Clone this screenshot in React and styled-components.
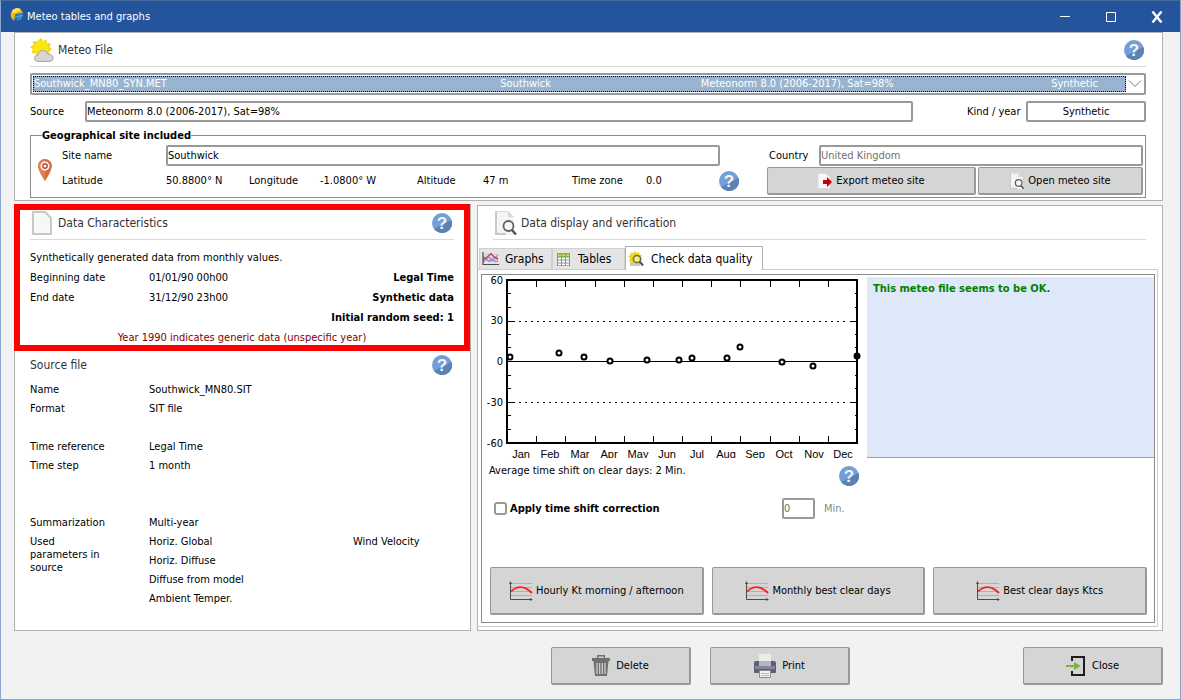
import React from 'react';
import styled, { createGlobalStyle } from 'styled-components';

const months = ['Jan', 'Feb', 'Mar', 'Apr', 'May', 'Jun', 'Jul', 'Aug', 'Sep', 'Oct', 'Nov', 'Dec'];

// x: position inside the year (px on the plot), y: time shift in minutes
const points = [
  [3, 3], [52, 6], [77, 3], [103, 0], [140, 1], [172, 1],
  [185, 2], [220, 2], [233, 10], [275, -1], [306, -4], [350, 4],
];

const HelpIcon = () => (
  <svg width="20" height="20" viewBox="0 0 20 20">
    <circle cx="10" cy="10" r="10" fill="#739fd8" />
    <path d="M19.6 7A10 10 0 0 1 2 16Z" fill="#5b82b3" />
    <text x="10" y="16" textAnchor="middle" fontFamily="Liberation Sans, sans-serif" fontWeight="bold" fontSize="17" fill="#f4f4f4">?</text>
  </svg>
);

const LogoIcon = () => (
  <svg width="14" height="18" viewBox="0 0 14 18">
    <path d="M4 12.500A6.300 6.300 0 1 1 13 5L6 6Z" fill="#f9b414" />
    <path d="M1.500 4A6 6 0 0 1 11 1.500L6 5Q3 5 1.500 4Z" fill="#fde04a" />
    <path d="M5.500 6L13.500 4.500Q13.500 10.500 9 12.500L4.500 12.500Q4.500 8 5.500 6Z" fill="#1f74b8" />
    <path d="M5 9L13 7.500M8.500 5.500L8 12.500M11 5L10.500 11.500" stroke="#64aee4" strokeWidth=".7" />
  </svg>
);

const SunCloudIcon = () => (
  <svg width="24" height="24" viewBox="0 0 24 24">
    <path
      d="M11 0L13 3L16.500 1.500L17 5L21 5.500L19.500 9L22 11.500L19 13.500L19 17L15.500 17L13 20L10 18L6.500 19L6 15.500L1.500 15L3 11.500L0 9L3.500 7L3 3L7 3.500Z"
      fill="#f5d51c"
    />
    <circle cx="11" cy="10" r="7.500" fill="#fbe712" />
    <path d="M8 23.400Q4.500 23.300 4.500 20.300Q4.600 17.300 7.800 17Q8.500 12.500 13 12.500Q17 12.500 18 16.200Q22.900 16.200 23.100 19.900Q22.900 23.400 19.500 23.400Z" fill="#d6d6d6" stroke="#a5a5a5" />
  </svg>
);

const PinIcon = () => (
  <svg width="14" height="22" viewBox="0 0 14 22">
    <path d="M7 0A7 7 0 0 1 14 7Q14 11 7 22Q0 11 0 7A7 7 0 0 1 7 0Z" fill="#d9673f" />
    <path d="M7 0A7 7 0 0 0 0 7Q0 11 7 22Z" fill="#e37f56" />
    <circle cx="7" cy="7" r="3.700" fill="#b04a2b" stroke="#fff" strokeWidth="1.600" />
    <circle cx="7" cy="7" r="1.500" fill="#fff" />
  </svg>
);

const PageIcon = () => (
  <svg width="24" height="24" viewBox="-2 0 24 24">
    <path d="M1 1H13L19 7V23H1Z" fill="#f7f7f7" stroke="#c8c8c8" strokeWidth="2" />
  </svg>
);

const PageSearchIcon = ({ size = 24 }) => (
  <svg width={size} height={size} viewBox="0 0 24 24">
    <path d="M1 0H14L20 6V24H1Z" fill="#f4f4f4" />
    <path d="M2 0V23H12" fill="none" stroke="#c8c8c8" strokeWidth="2" />
    <path d="M1 .5H14" stroke="#d8d8d8" />
    <path d="M14 0V6H20Z" fill="#d6d6d6" />
    <circle cx="14.500" cy="15" r="5" fill="#f6f6f6" stroke="#606060" strokeWidth="1.800" />
    <path d="M18 19L22 23.500" stroke="#505050" strokeWidth="2.400" />
  </svg>
);

const ExportIcon = () => (
  <svg width="16" height="16" viewBox="0 0 16 16">
    <path d="M1 .5H9L13 4.500V15.500H1Z" fill="#f7f7f7" stroke="#ddd" />
    <path d="M6 7H10V4L15 9L10 14V11H6Z" fill="#c80000" />
  </svg>
);

const GraphsIcon = () => (
  <svg width="17" height="14" viewBox="0 0 17 14">
    <path d="M1 2.500H16M1 5.500H16M1 8.500H16" stroke="#cfcfcf" />
    <path d="M1 4L4 7L7 9.500L10 7L13 9.500L16 9M1 10L4 7.500L7 5L10 9L13 6L16 3" fill="none" stroke="#9b92d2" strokeWidth="1.400" />
    <path d="M1 7.500L4 6L9 1.800L12 5L16 7" fill="none" stroke="#d2374a" strokeWidth="1.400" />
    <path d="M1 0V12.500H17" fill="none" stroke="#4c4c4c" strokeWidth="1.200" />
  </svg>
);

const TablesIcon = () => (
  <svg width="17" height="13" viewBox="-2 0 17 13">
    <rect width="13" height="13" fill="#8f9190" />
    <rect width="13" height="4" fill="#7cb342" />
    <path d="M1 1.500H4V3H1ZM5 1.500H8V3H5ZM9 1.500H12V3H9Z" fill="#d6dd5a" />
    <path d="M1 4.500H4V6.500H1ZM5 4.500H8V6.500H5ZM9 4.500H12V6.500H9ZM1 7.500H4V9.500H1ZM5 7.500H8V9.500H5ZM9 7.500H12V9.500H9ZM1 10.500H4V12.300H1ZM5 10.500H8V12.300H5ZM9 10.500H12V12.300H9Z" fill="#fff" />
  </svg>
);

const CheckIcon = () => (
  <svg width="17" height="16" viewBox="0 0 17 16">
    <path d="M4 8H12V15H2V11Z" fill="#c9c9c9" />
    <path d="M7 0L8.500 2L11 1L11.500 3.500L14 4L13 6.500L14 9L11.500 10L10 13L7.500 11.500L4 13L3.500 10.500L.5 10L2 7.500L0 5L2.500 4L2.500 1.500L5 2Z" fill="#f2d61b" />
    <circle cx="9" cy="8" r="3.600" fill="#f8ee6a" stroke="#666" strokeWidth="1.500" />
    <path d="M11.500 10.500L15 14.500" stroke="#555" strokeWidth="2.200" />
  </svg>
);

const CurveIcon = () => (
  <svg width="24" height="20" viewBox="0 0 24 20">
    <path d="M2 2.500H23M2 6.500H23M2 10.500H23M2 14.500H23" stroke="#b0b0b0" />
    <path d="M2 10.500Q12 1 23 12" fill="none" stroke="#fb1f1f" strokeWidth="1.800" />
    <path d="M1.500 1V18.500H22" fill="none" stroke="#4b4b4b" />
    <path d="M1.500 0L3 3H0ZM24 18.500L21 17V20Z" fill="#4b4b4b" />
  </svg>
);

const TrashIcon = () => (
  <svg width="18" height="21" viewBox="0 0 18 21">
    <path d="M0 3H18V6H0Z" fill="#707070" />
    <path d="M5.700 3V.8H12.300V3" fill="none" stroke="#707070" strokeWidth="1.500" />
    <path d="M1.500 6H16.500L15 21H3Z" fill="#707070" />
    <path d="M5 8V19M7.700 8V19M10.300 8V19M13 8V19" stroke="#d5d5d5" strokeWidth="1.200" />
  </svg>
);

const PrinterIcon = () => (
  <svg width="22" height="24" viewBox="0 0 22 24">
    <path d="M5 0H17V8H5Z" fill="#ebebe8" />
    <path d="M0 9Q0 7 2 7H20Q22 7 22 9V18Q22 19 21 19H1Q0 19 0 18Z" fill="#5f5f74" />
    <path d="M5 7H17V12H5Z" fill="#b4b5c6" />
    <path d="M1 12H21V15H1Z" fill="#85869b" />
    <path d="M5.500 16.500H16.500V23.500H5.500Z" fill="#f1f1f1" stroke="#8a8b9b" />
    <path d="M7 19.500H15M7 21.500H15" stroke="#bcbcbc" />
  </svg>
);

const ExitIcon = () => (
  <svg width="20" height="20" viewBox="0 0 20 20">
    <path d="M6 5V1H18V19H6V15" fill="none" stroke="#1d1d1b" strokeWidth="2" />
    <path d="M0 9H8V6L15 10L8 14V11H0Z" fill="#7db343" />
  </svg>
);

const px = (i) => 25 + Math.round((i * 350) / 12);
const py = (v) => 86 - (v * 163) / 120;

const TimeShiftChart = () => (
  <Plot width="385" height="183" viewBox="0 0 385 183" role="img" aria-label="Time shift by month">
    <g shapeRendering="crispEdges" stroke="#000" fill="none">
      <rect x="25" y="5" width="350" height="163" strokeWidth="2" />
      <path d="M25 86.500H375" />
      <path d="M26 46.500H33M368 46.500H375M26 127.500H33M368 127.500H375" />
      <path d="M37 46.500H367M37 127.500H367" strokeDasharray="2 4" />
      {months.slice(1).map((m, i) => (
        <path key={m} d={`M${px(i + 1) + 0.5} 5v7m0 149v7`} />
      ))}
      {[50, 40, 20, 10, -10, -20, -40, -50].map((v) => (
        <path key={v} d={`M26 ${Math.round(py(v)) + 0.5}h3m344 0h2`} />
      ))}
    </g>
    {[60, 30, 0, -30, -60].map((v) => (
      <AxisText key={v} x="21" y={Math.round(py(v)) + 4} textAnchor="end">{v}</AxisText>
    ))}
    {months.map((m, i) => (
      <MonthText key={m} x={39 + Math.round((i * 322) / 11)} y="183" textAnchor="middle">{m}</MonthText>
    ))}
    {points.map(([x, v]) => (
      <circle key={x} cx={25 + x} cy={Math.round(py(v))} r="2.500" fill={x === 350 ? '#000' : '#fff'} stroke="#000" strokeWidth="2" />
    ))}
  </Plot>
);

const MeteoFile = () => (
  <FilePanel>
    <Header>
      <SunCloudIcon />
      <Title>Meteo File</Title>
      <Help aria-label="Help"><HelpIcon /></Help>
    </Header>
    <Combo>
      <ComboText aria-hidden="true">
        <span>Southwick_MN80_SYN.MET</span>
        <span>Southwick</span>
        <span>Meteonorm 8.0 (2006-2017), Sat=98%</span>
        <span>Synthetic</span>
      </ComboText>
      <svg width="18" height="18" viewBox="0 0 18 18">
        <path d="M3 5.500L9 11.500L15 5.500" fill="none" stroke="#777" />
      </svg>
      <ComboSelect aria-label="Meteo file">
        <option>Southwick_MN80_SYN.MET</option>
      </ComboSelect>
    </Combo>
    <SourceRow>
      <label htmlFor="source">Source</label>
      <TextBox id="source" defaultValue="Meteonorm 8.0 (2006-2017), Sat=98%" />
      <label htmlFor="kind">Kind / year</label>
      <TextBox id="kind" defaultValue="Synthetic" $center />
    </SourceRow>
    <Site>
      <legend>Geographical site included</legend>
      <SiteBody>
        <PinIcon />
        <SiteInfo>
          <NameRow>
            <label htmlFor="site">Site name</label>
            <TextBox id="site" defaultValue="Southwick" />
          </NameRow>
          <CoordRow>
            <span>Latitude</span>
            <span>50.8800° N</span>
            <span>Longitude</span>
            <span>-1.0800° W</span>
            <span>Altitude</span>
            <span>47 m</span>
            <span>Time zone</span>
            <span>0.0</span>
            <Help aria-label="Help"><HelpIcon /></Help>
          </CoordRow>
        </SiteInfo>
        <SiteActions>
          <CountryRow>
            <label htmlFor="country">Country</label>
            <TextBox id="country" defaultValue="United Kingdom" disabled />
          </CountryRow>
          <SiteButtons>
            <Button $size="small"><ExportIcon />Export meteo site</Button>
            <Button $size="small"><PageSearchIcon size={16} />Open meteo site</Button>
          </SiteButtons>
        </SiteActions>
      </SiteBody>
    </Site>
  </FilePanel>
);

const Characteristics = () => (
  <Highlight>
    <Header>
      <PageIcon />
      <Title>Data Characteristics</Title>
      <Help aria-label="Help"><HelpIcon /></Help>
    </Header>
    <Lines>
      <p>Synthetically generated data from monthly values.</p>
      <DateRow><span>Beginning date</span><span>01/01/90 00h00</span><b>Legal Time</b></DateRow>
      <DateRow><span>End date</span><span>31/12/90 23h00</span><b>Synthetic data</b></DateRow>
      <DateRow><span /><span /><b>Initial random seed: 1</b></DateRow>
      <Note>Year 1990 indicates generic data (unspecific year)</Note>
    </Lines>
  </Highlight>
);

const SourceFile = () => (
  <SourceSection>
    <SourceHeader>
      <Title>Source file</Title>
      <Help aria-label="Help"><HelpIcon /></Help>
    </SourceHeader>
    <Facts>
      <dt>Name</dt><dd>Southwick_MN80.SIT</dd>
      <dt>Format</dt><dd>SIT file</dd>
    </Facts>
    <Facts $space={19}>
      <dt>Time reference</dt><dd>Legal Time</dd>
      <dt>Time step</dt><dd>1 month</dd>
    </Facts>
    <Facts $space={38}>
      <dt>Summarization</dt><dd>Multi-year</dd>
      <Wrapped>Used parameters in source</Wrapped>
      <Params>
        <span>Horiz. Global</span><span>Wind Velocity</span>
        <span>Horiz. Diffuse</span><span />
        <span>Diffuse from model</span><span />
        <span>Ambient Temper.</span><span />
      </Params>
    </Facts>
  </SourceSection>
);

const Verification = () => (
  <CheckPanel>
    <CheckHeader>
      <PageSearchIcon />
      <Title>Data display and verification</Title>
    </CheckHeader>
    <Tabs role="tablist">
      <Tab role="tab"><GraphsIcon />Graphs</Tab>
      <Tab role="tab"><TablesIcon />Tables</Tab>
      <Tab role="tab" aria-selected="true" $active><CheckIcon />Check data quality</Tab>
    </Tabs>
    <TabPage>
      <TabBody>
        <Results>
          <TimeShiftChart />
          <Message>This meteo file seems to be OK.</Message>
        </Results>
        <Average>
          <span>Average time shift on clear days: 2 Min.</span>
          <Help aria-label="Help"><HelpIcon /></Help>
        </Average>
        <Correction>
          <CheckLabel><CheckBox type="checkbox" />Apply time shift correction</CheckLabel>
          <MinutesBox aria-label="Time shift in minutes" defaultValue="0" disabled />
          <Muted>Min.</Muted>
        </Correction>
        <PlotButtons>
          <Button $size="large"><CurveIcon />Hourly Kt morning / afternoon</Button>
          <Button $size="large"><CurveIcon />Monthly best clear days</Button>
          <Button $size="large"><CurveIcon />Best clear days Ktcs</Button>
        </PlotButtons>
      </TabBody>
    </TabPage>
  </CheckPanel>
);

const App = () => (
  <Window>
    <GlobalStyle />
    <TitleBar>
      <LogoIcon />
      <h1>Meteo tables and graphs</h1>
      <WinButton aria-label="Minimize">
        <svg width="12" height="12"><path d="M1 5.500H11" stroke="#fff" /></svg>
      </WinButton>
      <WinButton aria-label="Maximize">
        <svg width="12" height="12"><path d="M1.500 1.500H10.500V10.500H1.500Z" fill="none" stroke="#fff" /></svg>
      </WinButton>
      <WinButton aria-label="Close window">
        <svg width="12" height="12"><path d="M1.500 .5L10.500 11.500M10.500 .5L1.500 11.500" stroke="#fff" strokeWidth="2.400" /></svg>
      </WinButton>
    </TitleBar>
    <Body>
      <MeteoFile />
      <Columns>
        <LeftPanel>
          <Characteristics />
          <SourceFile />
        </LeftPanel>
        <Verification />
      </Columns>
      <Footer>
        <Button><TrashIcon />Delete</Button>
        <Button><PrinterIcon />Print</Button>
        <Button><ExitIcon />Close</Button>
      </Footer>
    </Body>
  </Window>
);

export default App;

const GlobalStyle = createGlobalStyle`
  * {
    box-sizing: border-box;
  }

  body {
    margin: 0;
    background: #f2f2f2;
  }

  body, button, input, select {
    font-family: "DejaVu Sans Condensed", "DejaVu Sans", sans-serif;
    font-size: 11px;
    line-height: 14px;
    color: #000;
  }

  h1, h2, p, dl, dd {
    margin: 0;
    font-weight: normal;
  }

  svg {
    display: block;
    flex: none;
  }
`;

const Window = styled.div`
  display: flex;
  flex-direction: column;
  min-height: 100vh;
  border: 1px solid #8ba5d1;
  border-top-color: #476a9c;
`;

const TitleBar = styled.header`
  display: flex;
  align-items: center;
  gap: 3px;
  height: 31px;
  padding: 0 2px 0 9px;
  background: #24549c;
  color: #fff;

  h1 {
    flex: 1;
    font-size: 11px;
  }
`;

const WinButton = styled.button`
  display: flex;
  align-items: center;
  justify-content: center;
  width: 43px;
  height: 30px;
  border: 0;
  padding: 0;
  background: none;
`;

const Body = styled.main`
  flex: 1;
  padding: 0 17px 0 13px;
`;

const Header = styled.div`
  display: flex;
  align-items: center;
  gap: 4px;
  height: 34px;
  padding-right: 2px;
  border-bottom: 1px solid #d9d9d9;
`;

const Title = styled.h2`
  flex: 1;
  font-size: 12px;
  line-height: 16px;
  color: #333;
`;

const Help = styled.button`
  width: 20px;
  height: 20px;
  border: 0;
  border-radius: 50%;
  padding: 0;
  background: none;
`;

const Button = styled.button`
  display: flex;
  align-items: center;
  justify-content: center;
  gap: ${({ $size }) => ($size ? '3px' : '6px')};
  width: ${({ $size }) => ($size ? 'auto' : '140px')};
  height: ${({ $size }) => ({ small: '28px', large: '48px' }[$size] || '38px')};
  border: 1px solid #989898;
  border-width: 1px 2px 2px 1px;
  border-radius: 2px;
  padding: 0;
  background: #d5d5d5;
  white-space: nowrap;
`;

const TextBox = styled.input`
  min-width: 0;
  width: 100%;
  height: 21px;
  border: 2px solid #999;
  border-radius: 2px;
  padding: 0;
  background: #fff;
  text-align: ${({ $center }) => ($center ? 'center' : 'left')};

  &:disabled {
    color: #707070;
  }
`;

const FilePanel = styled.section`
  border: 1px solid #b0b0b0;
  padding: 0 16px 2px 15px;
  background: #fff;
`;

const Combo = styled.div`
  position: relative;
  display: flex;
  align-items: center;
  height: 22px;
  margin-top: 6px;
  border: 2px solid #999;
  border-radius: 2px;
  padding: 0 0 0 1px;
`;

const ComboText = styled.div`
  flex: 1;
  display: grid;
  grid-template-columns: 467fr 201fr 351fr 74fr;
  height: 16px;
  border: 1px dotted #000;
  background: #99b4d1;
  color: #fff;
  white-space: nowrap;
`;

// the native control lies over the drawn row and takes the clicks
const ComboSelect = styled.select`
  position: absolute;
  inset: 0;
  width: 100%;
  opacity: 0;
`;

const SourceRow = styled.div`
  display: grid;
  grid-template-columns: 55px 1fr 59px 120px;
  align-items: center;
  margin-top: 6px;

  input:first-of-type {
    width: calc(100% - 54px);
  }
`;

const Site = styled.fieldset`
  min-width: 0;
  margin: 6px 0 0;
  border: 1px solid #8c8c8c;
  padding: 2px 2px 2px 7px;

  legend {
    margin-left: 4px;
    padding: 0;
    font-weight: bold;
    line-height: 15px;
  }
`;

const SiteBody = styled.div`
  display: flex;
  align-items: center;
`;

const SiteInfo = styled.div`
  flex: 1;
  padding: 0 28px 0 10px;
`;

const NameRow = styled.div`
  display: grid;
  grid-template-columns: 104px 1fr;
  align-items: center;
  padding-right: 19px;
`;

const CoordRow = styled.div`
  display: grid;
  grid-template-columns: 104px 83fr 71fr 97fr 66fr 89fr 74fr 73fr 20px;
  align-items: center;
  height: 29px;
  white-space: nowrap;
`;

const SiteActions = styled.div`
  width: 376px;
`;

const CountryRow = styled.div`
  display: grid;
  grid-template-columns: 50px 1fr;
  align-items: center;
  padding-left: 2px;
`;

const SiteButtons = styled.div`
  display: grid;
  grid-template-columns: 209fr 165fr;
  gap: 2px;
  margin-top: 1px;
`;

const Columns = styled.div`
  display: grid;
  grid-template-columns: 457px 1fr;
  gap: 6px;
  margin-top: 3px;
`;

const LeftPanel = styled.section`
  display: flex;
  flex-direction: column;
  border-right: 1px solid #b0b0b0;
  border-bottom: 1px solid #b0b0b0;
  background: #fff;
`;

const Highlight = styled.div`
  border: 6px solid #f00;
  padding: 0 10px;

  ${Header} {
    height: 30px;
    padding-bottom: 4px;
  }
`;

const Lines = styled.div`
  display: flex;
  flex-direction: column;
  gap: 6px;
  padding-top: 11px;
`;

const DateRow = styled.div`
  display: grid;
  grid-template-columns: 119px 1fr 1fr;

  b {
    text-align: right;
  }
`;

const Note = styled.p`
  color: #800000;
  text-align: center;
`;

const SourceSection = styled.div`
  flex: 1;
  border-left: 1px solid #b0b0b0;
  padding: 3px 16px 0 15px;
`;

const SourceHeader = styled.div`
  display: flex;
  align-items: center;
  height: 22px;
  padding-right: 2px;
`;

const Facts = styled.dl`
  display: grid;
  grid-template-columns: 119px 1fr;
  margin-top: ${({ $space }) => $space || 4}px;
  line-height: 19px;
`;

const Wrapped = styled.dt`
  padding: 3px 40px 0 0;
  line-height: 13px;
`;

const Params = styled.dd`
  display: grid;
  grid-template-columns: 204px 1fr;
`;

const CheckPanel = styled.section`
  min-width: 0;
  margin-top: 1px;
  border: 1px solid #b0b0b0;
  padding: 0 4px 3px 0;
  background: #fff;
`;

const CheckHeader = styled(Header)`
  gap: 3px;
  margin: 0 12px 0 15px;
  padding-left: 1px;
`;

const Tabs = styled.div`
  display: flex;
  align-items: flex-end;
  height: 29px;
  padding-left: 1px;
`;

const Tab = styled.button`
  display: flex;
  align-items: center;
  gap: 6px;
  min-width: ${({ $active }) => ($active ? '138px' : '73px')};
  height: ${({ $active }) => ($active ? '24px' : '21px')};
  border: 1px solid ${({ $active }) => ($active ? '#b0b0b0' : '#d0d0d0')};
  border-bottom: 0;
  margin-bottom: ${({ $active }) => ($active ? '-1px' : '0')};
  padding: 0 7px 0 2px;
  background: ${({ $active }) => ($active ? '#fff' : '#e4e4e4')};
  font-size: 12px;
`;

const TabPage = styled.div`
  border: 1px solid #ccc;
  border-left: 0;
  padding: 4px 2px 3px 3px;
`;

const TabBody = styled.div`
  border: 1px solid #8a8a8a;
  padding-bottom: 7px;
`;

const Results = styled.div`
  display: grid;
  grid-template-columns: 385px 1fr;
`;

const Plot = styled.svg`
  overflow: hidden;
`;

const AxisText = styled.text`
  font-family: "DejaVu Sans Condensed", "DejaVu Sans", sans-serif;
  font-size: 11px;
`;

const MonthText = styled.text`
  font-family: "Liberation Sans", Arial, sans-serif;
  font-size: 11px;
`;

const Message = styled.p`
  margin-top: 2px;
  border-bottom: 1px solid #a0a0a0;
  padding: 5px 6px;
  background: #dfe8f8;
  color: #008000;
  font-weight: bold;
`;

const Average = styled.div`
  display: flex;
  justify-content: space-between;
  width: 377px;
  padding-left: 7px;

  span {
    padding-top: 6px;
  }

  ${Help} {
    margin-top: 8px;
  }
`;

const Correction = styled.div`
  display: flex;
  align-items: center;
  gap: 9px;
  margin-top: 12px;
  padding-left: 12px;
`;

const CheckLabel = styled.label`
  display: flex;
  align-items: center;
  gap: 3px;
  width: 279px;
  font-weight: bold;
`;

const CheckBox = styled.input`
  appearance: none;
  width: 13px;
  height: 13px;
  margin: 0;
  border: 2px solid #999;
  border-radius: 3px;
  background: #fff;
`;

const MinutesBox = styled(TextBox)`
  width: 33px;
`;

const Muted = styled.span`
  color: #888;
`;

const PlotButtons = styled.div`
  display: grid;
  grid-template-columns: repeat(3, 1fr);
  gap: 8px;
  margin-top: 48px;
  padding: 0 7px 0 8px;
`;

const Footer = styled.footer`
  display: flex;
  gap: 19px;
  margin-top: 16px;
  padding: 0 0 14px 537px;

  ${Button}:last-child {
    margin-left: auto;
  }
`;
